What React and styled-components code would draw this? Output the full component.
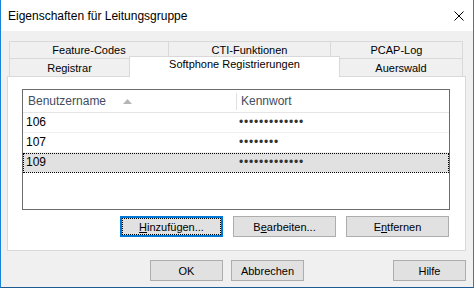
import styled, { createGlobalStyle, css } from 'styled-components'

const GlobalStyle = createGlobalStyle`
  html, body {
    margin: 0;
    padding: 0;
    background: #f0f0f0;
  }
  body {
    font-family: "Liberation Sans", Arial, sans-serif;
  }
`

const Window = styled.div`
  width: 474px;
  height: 288px;
  box-sizing: border-box;
  border: 1px solid #1883d7;
  border-top: none;
  border-bottom-color: #1b5a92;
  display: flex;
  flex-direction: column;
  background: #f0f0f0;
`

const TitleBar = styled.div`
  height: 31px;
  flex: none;
  background: #fff;
  display: flex;
  align-items: center;
  justify-content: space-between;
  padding: 0 9px 0 7px;
  font-size: 12px;
  color: #000;
`

const Body = styled.div`
  flex: 1;
  display: flex;
  flex-direction: column;
  padding: 10px 7px 6px 6px;
`

const TabStrip = styled.div`
  margin: 0 3px 0 2px;
  display: flex;
  flex-direction: column;
`

const TabRow = styled.div`
  display: flex;
  align-items: flex-end;
  height: ${p => p.$h}px;
`

const Tab = styled.div`
  box-sizing: border-box;
  width: ${p => p.$w}px;
  height: ${p => p.$h}px;
  border: 1px solid #d9d9d9;
  border-bottom: none;
  background: #f0f0f0;
  font-size: 11px;
  line-height: 13px;
  color: #000;
  text-align: center;
  padding-top: ${p => p.$pt}px;
  & + & {
    margin-left: -1px;
  }
  ${p => p.$active && css`
    background: #fff;
    height: 21px;
    margin-bottom: -1px;
    padding-top: 1px;
    position: relative;
    z-index: 1;
  `}
`

const Panel = styled.div`
  box-sizing: border-box;
  height: 175px;
  background: #fff;
  border: 1px solid #d9d9d9;
  padding: 12px 15px 13px 14px;
  display: flex;
  flex-direction: column;
`

const ListView = styled.div`
  box-sizing: border-box;
  height: 121px;
  border: 1px solid #6b6b6b;
  background: #fff;
  font-size: 12px;
`

const Header = styled.div`
  display: flex;
  height: 22px;
  border-bottom: 1px solid #e5e5e5;
  color: #3f4d5e;
  line-height: 22px;
`

const HeaderCell = styled.div`
  display: flex;
  align-items: center;
  width: ${p => (p.$w ? `${p.$w}px` : 'auto')};
  flex: ${p => (p.$w ? 'none' : '1')};
  padding-left: ${p => p.$pl}px;
  box-sizing: border-box;
`

const SortArrow = styled.svg`
  margin-left: 17px;
  margin-top: 1px;
`

const ColumnDivider = styled.div`
  width: 1px;
  height: 17px;
  align-self: center;
  background: #e0e0e0;
`

const Row = styled.div`
  display: flex;
  height: 19px;
  line-height: 19px;
  border-bottom: 1px solid #f0f0f0;
  color: #000;
  ${p => p.$selected && css`
    background: #e1e1e1;
    outline: 1px dotted #000;
    outline-offset: -1px;
  `}
`

const Cell = styled.div`
  width: ${p => (p.$w ? `${p.$w}px` : 'auto')};
  flex: ${p => (p.$w ? 'none' : '1')};
  padding-left: ${p => p.$pl}px;
  box-sizing: border-box;
`

const Dots = styled.span`
  color: #333;
  letter-spacing: 0.8px;
  font-size: 12px;
`

const ButtonRow = styled.div`
  display: flex;
  justify-content: flex-end;
  gap: ${p => p.$gap}px;
  margin-top: ${p => p.$mt}px;
  padding-right: ${p => p.$pr || 0}px;
`

const Button = styled.button`
  box-sizing: border-box;
  width: ${p => p.$w}px;
  height: 21px;
  margin: 0;
  margin-left: ${p => p.$ml || 0}px;
  padding: 0;
  border: 1px solid #adadad;
  background: #e1e1e1;
  font-family: "Liberation Sans", Arial, sans-serif;
  font-size: 11px;
  color: #000;
  ${p => p.$focused && css`
    border: 2px solid #0078d7;
    outline: 1px dotted #000;
    outline-offset: -3px;
  `}
`

const U = styled.span`
  text-decoration: underline;
`

const CloseIcon = () => (
  <svg width="10" height="10" viewBox="0 0 10 10">
    <path d="M0.5 0.5 L9.5 9.5 M9.5 0.5 L0.5 9.5" stroke="#000" strokeWidth="1" fill="none" />
  </svg>
)

const rows = [
  { name: '106', pw: 13 },
  { name: '107', pw: 8 },
  { name: '109', pw: 13, selected: true },
]

export default function App() {
  return (
    <>
      <GlobalStyle />
      <Window>
        <TitleBar>
          <span>Eigenschaften für Leitungsgruppe</span>
          <CloseIcon />
        </TitleBar>
        <Body>
          <TabStrip>
            <TabRow $h={17}>
              <Tab $w={160} $h={17} $pt={2}>Feature-Codes</Tab>
              <Tab $w={163} $h={17} $pt={2}>CTI-Funktionen</Tab>
              <Tab $w={133} $h={17} $pt={2}>PCAP-Log</Tab>
            </TabRow>
            <TabRow $h={18}>
              <Tab $w={121} $h={18} $pt={3}>Registrar</Tab>
              <Tab $w={211} $h={18} $pt={3} $active>Softphone Registrierungen</Tab>
              <Tab $w={124} $h={18} $pt={3}>Auerswald</Tab>
            </TabRow>
          </TabStrip>
          <Panel>
            <ListView>
              <Header>
                <HeaderCell $w={213} $pl={5}>
                  Benutzername
                  <SortArrow width="9" height="5" viewBox="0 0 9 5">
                    <path d="M4.5 0 L9 5 L0 5 Z" fill="#b5b5b5" />
                  </SortArrow>
                </HeaderCell>
                <ColumnDivider />
                <HeaderCell $pl={4}>Kennwort</HeaderCell>
              </Header>
              {rows.map(r => (
                <Row key={r.name} $selected={r.selected}>
                  <Cell $w={214} $pl={3}>{r.name}</Cell>
                  <Cell $pl={2}>
                    <Dots>{'•'.repeat(r.pw)}</Dots>
                  </Cell>
                </Row>
              ))}
            </ListView>
            <ButtonRow $gap={10} $mt={6} $pr={1}>
              <Button $w={103} $focused>
                <U>H</U>inzufügen...
              </Button>
              <Button $w={103}>
                B<U>e</U>arbeiten...
              </Button>
              <Button $w={103}>
                E<U>n</U>tfernen
              </Button>
            </ButtonRow>
          </Panel>
          <ButtonRow $gap={8} $mt={9}>
            <Button $w={73}>OK</Button>
            <Button $w={73}>Abbrechen</Button>
            <Button $w={73} $ml={81}>Hilfe</Button>
          </ButtonRow>
        </Body>
      </Window>
    </>
  )
}
